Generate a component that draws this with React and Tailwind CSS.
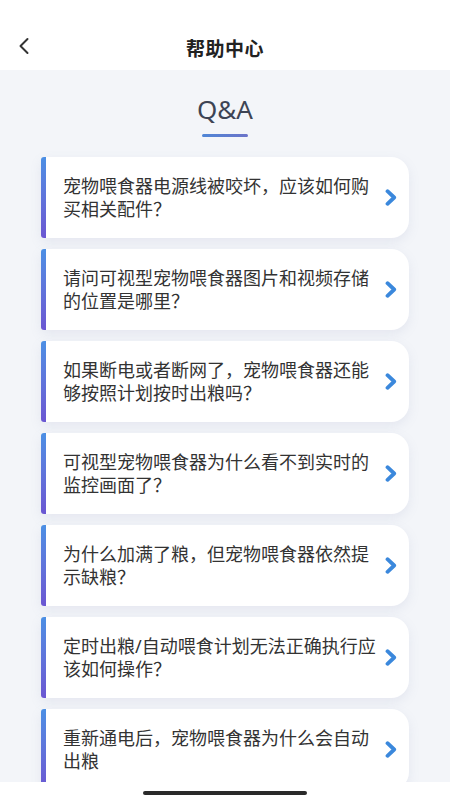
import { ChevronLeft } from 'lucide-react';

const QUESTIONS = [
  ['宠物喂食器电源线被咬坏，应该如何购', '买相关配件？'],
  ['请问可视型宠物喂食器图片和视频存储', '的位置是哪里？'],
  ['如果断电或者断网了，宠物喂食器还能', '够按照计划按时出粮吗？'],
  ['可视型宠物喂食器为什么看不到实时的', '监控画面了？'],
  ['为什么加满了粮，但宠物喂食器依然提', '示缺粮？'],
  ['定时出粮/自动喂食计划无法正确执行应', '该如何操作？'],
  ['重新通电后，宠物喂食器为什么会自动', '出粮'],
];

function Arrow() {
  return (
    <svg width="12" height="17" viewBox="0 0 12 17" className="shrink-0">
      <path
        d="M2.5 2.2 L9.2 8.5 L2.5 14.8"
        fill="none"
        stroke="#3b88dc"
        strokeWidth="3.8"
        strokeLinecap="round"
        strokeLinejoin="round"
      />
    </svg>
  );
}

export default function App() {
  return (
    <div
      className="w-[450px] h-[800px] bg-white flex flex-col overflow-hidden"
      style={{ fontFamily: '"Noto Sans", "Noto Sans CJK SC", sans-serif' }}
    >
      {/* Header */}
      <div className="h-[70px] shrink-0 relative flex items-center justify-center">
        <ChevronLeft className="absolute left-[10px] top-[32px] w-[28px] h-[28px] text-[#333]" strokeWidth={1.7} />
        <h1 className="mt-[28px] text-[19px] font-bold text-[#222] tracking-[0.5px]">帮助中心</h1>
      </div>

      {/* Content */}
      <div className="h-[712px] shrink-0 bg-[#f3f5f9] overflow-hidden flex flex-col items-center">
        <p className="mt-[22px] text-[26px] leading-[34px] text-[#3d4454] font-normal">Q&amp;A</p>
        <div className="mt-[8px] w-[46px] h-[3px] shrink-0 rounded-full bg-[#5a80cf] bg-[linear-gradient(90deg,#4f86d6,#6b73c9)]" />

        <div className="mt-[20px] w-full flex flex-col gap-[11px] pl-[41px] pr-[41px]">
          {QUESTIONS.map((lines, i) => (
            <div
              key={i}
              className="h-[81px] shrink-0 flex bg-white rounded-r-[18px] rounded-l-[4px] shadow-[0_4px_12px_rgba(120,135,170,0.12)]"
            >
              <div className="w-[5px] rounded-l-[3px] bg-gradient-to-b from-[#4b8fe4] to-[#6a56d2]" />
              <div className="flex-1 flex items-center pl-[17px] pr-[12px]">
                <div className="flex-1 text-[18px] leading-[23px] text-[#333]">
                  {lines.map((l, j) => (
                    <div key={j} className="whitespace-nowrap">{l}</div>
                  ))}
                </div>
                <Arrow />
              </div>
            </div>
          ))}
        </div>
      </div>

      {/* Home indicator */}
      <div className="flex-1 flex items-start justify-center pt-[9px]">
        <div className="w-[164px] h-[4px] rounded-full bg-[#2a2a2a]" />
      </div>
    </div>
  );
}
